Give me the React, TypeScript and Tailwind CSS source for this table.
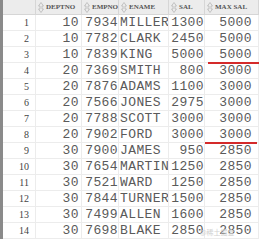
const rows: [number, number, number, string, number, number][] = [
  [1, 10, 7934, "MILLER", 1300, 5000],
  [2, 10, 7782, "CLARK", 2450, 5000],
  [3, 10, 7839, "KING", 5000, 5000],
  [4, 20, 7369, "SMITH", 800, 3000],
  [5, 20, 7876, "ADAMS", 1100, 3000],
  [6, 20, 7566, "JONES", 2975, 3000],
  [7, 20, 7788, "SCOTT", 3000, 3000],
  [8, 20, 7902, "FORD", 3000, 3000],
  [9, 30, 7900, "JAMES", 950, 2850],
  [10, 30, 7654, "MARTIN", 1250, 2850],
  [11, 30, 7521, "WARD", 1250, 2850],
  [12, 30, 7844, "TURNER", 1500, 2850],
  [13, 30, 7499, "ALLEN", 1600, 2850],
  [14, 30, 7698, "BLAKE", 2850, 2850],
];

function SortIcon() {
  return (
    <svg width="6" height="11" viewBox="0 0 6 11" className="shrink-0">
      <path d="M3 0.5 L5.5 4 H4 V7 H5.5 L3 10.5 L0.5 7 H2 V4 H0.5 Z" fill="none" stroke="#b8b8b8" strokeWidth="0.8" />
    </svg>
  );
}

function Head({ label }: { label: string }) {
  return (
    <div className="flex h-[15px] items-center gap-[2px] overflow-hidden whitespace-nowrap border-r border-b border-[#d6d6d6] bg-[#ececec] pl-[2px]">
      <SortIcon />
      <span className="text-[7px] font-bold uppercase text-[#555]" style={{ fontFamily: '"Liberation Serif", serif' }}>
        {label}
      </span>
    </div>
  );
}

const cell = "flex h-[16px] items-center overflow-hidden whitespace-nowrap border-r border-b border-[#ececec] text-[13px] tracking-[0.4px] text-[#5a5a5a]";
const mono = { fontFamily: '"Liberation Mono", "Courier New", monospace' };

export default function App() {
  return (
    <main className="relative h-[240px] w-[259px] overflow-hidden bg-white">
      <div className="grid grid-cols-[3px_33px_46px_37px_50px_36px_54px]">
        <div className="row-span-15 bg-[#8a8a8a]" />
        <div className="h-[15px] border-r border-b border-[#d6d6d6] bg-[#ececec]" />
        <Head label="Deptno" />
        <Head label="Empno" />
        <Head label="Ename" />
        <Head label="Sal" />
        <Head label="Max Sal" />
        {rows.map(([n, dept, emp, name, sal, max]) => (
          <div key={n} className="contents">
            <div className="flex h-[16px] items-center justify-end border-r border-b border-[#ececec] pr-[6px] text-[10px] text-[#444]" style={{ fontFamily: '"Liberation Serif", serif' }}>
              {n}
            </div>
            <div className={cell + " justify-end pr-[2px]"} style={mono}>{dept}</div>
            <div className={cell + " justify-end pr-[0px]"} style={mono}>{emp}</div>
            <div className={cell + " pl-[1px]"} style={mono}>{name}</div>
            <div className={cell + " justify-end pr-[0px]"} style={mono}>{sal}</div>
            <div className={cell + " justify-end pr-[6px]"} style={mono}>{max}</div>
          </div>
        ))}
      </div>
      <div className="absolute left-[208px] top-[62px] h-[2px] w-[51px] bg-[#d42a2a]" />
      <div className="absolute left-[205px] top-[142px] h-[2px] w-[52px] bg-[#d42a2a]" />
      <div className="absolute left-[200px] top-[227px] text-[7px] text-[#d0d0d0]" style={{ fontFamily: '"Noto Sans CJK SC", sans-serif' }}>
        @稀土掘金
      </div>
    </main>
  );
}
